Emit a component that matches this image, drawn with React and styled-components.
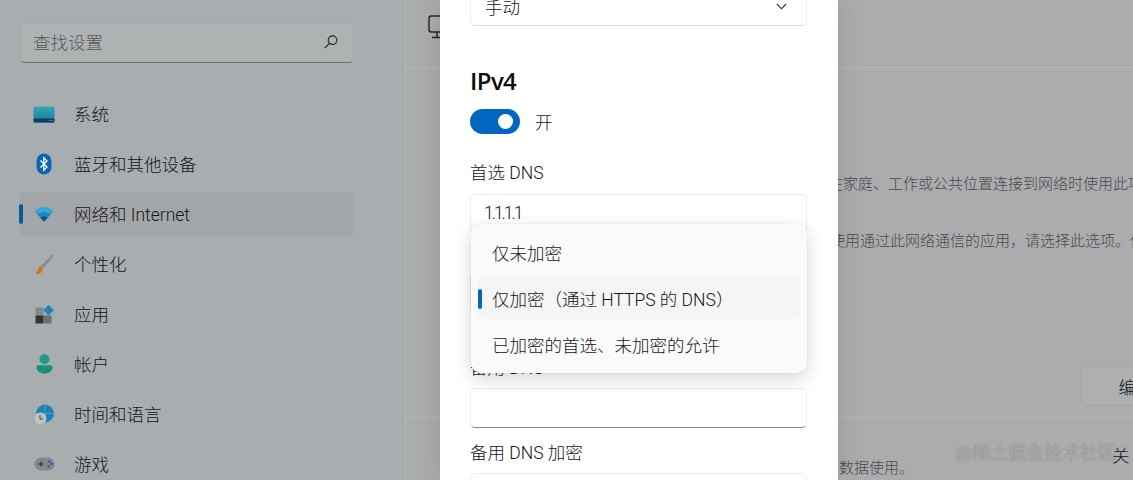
import React from "react";
import styled, { createGlobalStyle } from "styled-components";

const GlobalStyle = createGlobalStyle`
  html, body {
    margin: 0;
    padding: 0;
    overflow: hidden;
    background: #abacae;
  }
  * {
    box-sizing: border-box;
  }
  body {
    font-family: Roboto, "Noto Sans CJK SC", sans-serif;
    font-size: 17.5px;
    font-weight: 300;
    color: #141516;
  }
`;

const Page = styled.div`
  position: relative;
  display: grid;
  grid-template-columns: 405px 1fr;
  width: 1133px;
  height: 480px;
  overflow: hidden;
`;

const Sidebar = styled.aside`
  background: #a8adb0;
  padding: 23px 51px 0 20px;
  overflow: hidden;
`;

const SearchBox = styled.div`
  display: flex;
  align-items: center;
  justify-content: space-between;
  height: 40px;
  padding: 0 15px 3px 12px;
  margin-bottom: 29px;
  background: #afb2b3;
  border: 1px solid #a5a8aa;
  border-bottom: 1px solid #6d7073;
  border-radius: 5px;
  color: #55585a;
`;

const NavList = styled.nav`
  display: flex;
  flex-direction: column;
  gap: 6px;
`;

const NavItem = styled.div`
  position: relative;
  display: flex;
  align-items: center;
  gap: 19px;
  height: 44px;
  padding-left: 13px;
  border-radius: 5px;
  background: ${(p) => (p.$active ? "#a3a6a8" : "transparent")};
  &::before {
    content: "";
    display: ${(p) => (p.$active ? "block" : "none")};
    position: absolute;
    left: -1px;
    top: 12px;
    width: 4px;
    height: 20px;
    border-radius: 2px;
    background: #0a5a96;
  }
`;

const NavLabel = styled.span`
  margin-top: -2px;
`;

const IconSlot = styled.span`
  display: flex;
  align-items: center;
  justify-content: center;
  width: 22px;
  height: 22px;
  flex: none;
`;

const Content = styled.main`
  background: #abacae;
  border-left: 1px solid #b2b4b5;
  overflow: hidden;
`;

const HeaderBar = styled.header`
  display: flex;
  align-items: flex-start;
  height: 68px;
  padding: 15px 0 0 22px;
  border-bottom: 1px solid #b6b8b9;
`;

const Description = styled.p`
  margin: 0;
  padding-left: ${(p) => p.$indent}px;
  height: 21px;
  line-height: 21px;
  font-size: 15px;
  white-space: nowrap;
  color: #48494b;
`;

const DescriptionStack = styled.div`
  display: flex;
  flex-direction: column;
  gap: 36px;
  padding-top: 106px;
`;

const ActionRow = styled.div`
  display: flex;
  height: 52px;
  margin-top: 114px;
  padding-left: 675px;
  border-bottom: 1px solid #b3b5b6;
`;

const EditButton = styled.button`
  flex: none;
  width: 110px;
  height: 40px;
  padding: 0;
  font: inherit;
  color: #141516;
  background: #adafb0;
  border: 1px solid #a3a5a7;
  border-radius: 5px;
  white-space: nowrap;
`;

const BottomRow = styled.div`
  display: flex;
  align-items: flex-start;
`;

const StateLabel = styled.span`
  margin: 26px 0 0 198px;
  line-height: 24px;
`;

const BottomNote = styled(Description)`
  margin-top: 40px;
`;

const Dialog = styled.section`
  position: absolute;
  top: 0;
  left: 440px;
  width: 398px;
  height: 480px;
  padding: 0 31px 0 30px;
  background: #ffffff;
  overflow: hidden;
  box-shadow: 0 0 26px rgba(0, 0, 0, 0.12);
  clip-path: inset(0 -40px);
`;

const Field = styled.div`
  display: flex;
  align-items: center;
  justify-content: space-between;
  height: ${(p) => p.$height || 40}px;
  margin-top: ${(p) => p.$top || 0}px;
  padding: 0 19px 3px 14px;
  background: #fff;
  border: 1px solid #ececec;
  border-bottom: 1px solid ${(p) => (p.$focused ? "#868686" : "#dcdcdc")};
  border-radius: 5px;
`;

const FieldValue = styled.span`
  margin-left: -1px;
  letter-spacing: -2px;
`;

const Heading = styled.h2`
  margin: 36px 0 0;
  height: 38px;
  line-height: 38px;
  font-family: "Open Sans", sans-serif;
  font-size: 24px;
  font-weight: 600;
  letter-spacing: -0.6px;
  color: #0b0b0b;
`;

const ToggleRow = styled.div`
  display: flex;
  align-items: center;
  gap: 15px;
  margin-top: 9px;
  height: 25px;
`;

const Toggle = styled.span`
  display: flex;
  align-items: center;
  justify-content: flex-end;
  width: 50px;
  height: 25px;
  padding-right: 7px;
  border-radius: 13px;
  background: #0067c0;
  &::after {
    content: "";
    width: 15px;
    height: 15px;
    border-radius: 50%;
    background: #fff;
  }
`;

const Label = styled.div`
  height: 24px;
  line-height: 24px;
  margin-top: ${(p) => p.$top}px;
`;

const Menu = styled.ul`
  position: absolute;
  top: 224px;
  left: 31px;
  width: 336px;
  height: 149px;
  margin: 0;
  padding: 8px 7px;
  display: flex;
  flex-direction: column;
  gap: 4px;
  list-style: none;
  background: #fafafa;
  border-radius: 10px;
  box-shadow: 0 6px 18px rgba(0, 0, 0, 0.16), 0 0 2px rgba(0, 0, 0, 0.08);
`;

const MenuItem = styled.li`
  position: relative;
  display: flex;
  align-items: center;
  height: 42px;
  padding-left: 14px;
  border-radius: 5px;
  background: ${(p) => (p.$selected ? "#f5f5f5" : "transparent")};
  &::before {
    content: "";
    display: ${(p) => (p.$selected ? "block" : "none")};
    position: absolute;
    left: 0;
    top: 11px;
    width: 4px;
    height: 20px;
    border-radius: 2px;
    background: #0067c0;
  }
`;

const Watermark = styled.div`
  position: absolute;
  left: 956px;
  top: 441px;
  font-size: 18px;
  font-weight: 400;
  line-height: 24px;
  white-space: nowrap;
  color: rgba(255, 255, 255, 0.45);
  text-shadow: 0 0 1px rgba(70, 70, 70, 0.8);
`;

const SystemIcon = () => (
  <svg width="22" height="17" viewBox="0 0 22 17">
    <defs>
      <linearGradient id="sys" x1="0" y1="0" x2="0" y2="1">
        <stop offset="0" stopColor="#34a5b8" />
        <stop offset="1" stopColor="#1b78a0" />
      </linearGradient>
    </defs>
    <rect x="0.5" y="0.5" width="21" height="16" rx="1.5" fill="url(#sys)" />
    <path d="M.5 12.5h21V15a1.5 1.5 0 0 1-1.5 1.5H2A1.5 1.5 0 0 1 .5 15z" fill="#0b4063" />
    <path d="M16 14.5h1M18.5 14.5h1" stroke="#8fb5c8" />
  </svg>
);

const BluetoothIcon = () => (
  <svg width="16" height="22" viewBox="0 0 16 22">
    <rect x="0.5" y="0.5" width="15" height="21" rx="7.5" fill="#0b66b8" />
    <path d="M4.5 7.5 11 14l-3.2 3.2V4.8L11 8l-6.5 6.500" fill="none" stroke="#fff" strokeWidth="1.3" />
  </svg>
);

const WifiIcon = () => (
  <svg width="20" height="16" viewBox="0 0 20 16">
    <path d="M0.500 5.500C5.500 -.5 14.500 -.5 19.500 5.500L10 15.500z" fill="#36a6d6" />
    <path d="M3.500 8.600C7 5 13 5 16.500 8.600L10 15.500z" fill="#1a86c4" />
    <path d="M6.500 11.700C8.500 10 11.500 10 13.500 11.700L10 15.500z" fill="#0d4f86" />
  </svg>
);

const BrushIcon = () => (
  <svg width="20" height="21" viewBox="0 0 20 21">
    <path d="M18.300 .5 6.500 12l2.600 2.800L19.800 1.800z" fill="#8b8e91" />
    <path d="M6.300 12.300C4 13.500 4 17.500 1 20c3.500.5 7-.5 8-5z" fill="#d9730f" />
  </svg>
);

const AppsIcon = () => (
  <svg width="19" height="19" viewBox="0 0 19 19">
    <rect x="0.500" y="2.500" width="8" height="8" fill="#85888b" />
    <rect x="0.500" y="10.500" width="8" height="8" fill="#2f3237" />
    <rect x="8.500" y="10.500" width="8" height="8" fill="#6c6f73" />
    <path d="M13.500 0 18.800 5.300 13.500 10.500 8.300 5.300z" fill="#1b84b8" />
  </svg>
);

const AccountIcon = () => (
  <svg width="17" height="20" viewBox="0 0 17 20">
    <circle cx="8.500" cy="5.200" r="5" fill="#1f9a86" />
    <path d="M.500 13c0-1 .8-1.800 1.800-1.800h12.400c1 0 1.800.8 1.800 1.800 0 4-3.500 6.500-8 6.500S.500 17 .500 13z" fill="#17907e" />
  </svg>
);

const TimeIcon = () => (
  <svg width="20" height="21" viewBox="0 0 20 21">
    <circle cx="11" cy="9.500" r="9" fill="#1f82b8" />
    <path d="M11 .5v18M2 9.500h18" stroke="#5bb1d6" strokeWidth="0.600" />
    <circle cx="6.500" cy="14.500" r="6" fill="#bfc1c3" />
    <path d="M6 11v4h3" fill="none" stroke="#333" strokeWidth="0.900" />
  </svg>
);

const GameIcon = () => (
  <svg width="21" height="14" viewBox="0 0 21 14">
    <rect x="0.500" y="0.500" width="20" height="13" rx="6.500" fill="#85888b" />
    <path d="M4.500 7h5M7 4.500v5" stroke="#26282b" strokeWidth="1" />
    <circle cx="15.500" cy="4.500" r="1.300" fill="#1e62ae" />
    <circle cx="17.500" cy="7" r="1.300" fill="#1e62ae" />
    <circle cx="14.500" cy="9.500" r="1.300" fill="#1e62ae" />
  </svg>
);

const SearchIcon = () => (
  <svg width="14" height="14" viewBox="0 0 14 14" fill="none" stroke="#242527" strokeWidth="1.100">
    <circle cx="8.500" cy="5.200" r="4.300" />
    <path d="M5.400 8.300.800 13" />
  </svg>
);

const MonitorIcon = () => (
  <svg width="24" height="24" viewBox="0 0 24 24" fill="none" stroke="#26282a" strokeWidth="1.500">
    <rect x="1" y="1" width="22" height="16" rx="2.500" />
    <path d="M9 17v5M4 22.500h12" />
  </svg>
);

const Chevron = () => (
  <svg width="11" height="7" viewBox="0 0 11 7" fill="none" stroke="#3c3c3c" strokeWidth="1.100">
    <path d="M.8 1 5.500 5.700 10.200 1" />
  </svg>
);

const navItems = [
  { label: "系统", icon: <SystemIcon /> },
  { label: "蓝牙和其他设备", icon: <BluetoothIcon /> },
  { label: "网络和 Internet", icon: <WifiIcon />, active: true },
  { label: "个性化", icon: <BrushIcon /> },
  { label: "应用", icon: <AppsIcon /> },
  { label: "帐户", icon: <AccountIcon /> },
  { label: "时间和语言", icon: <TimeIcon /> },
  { label: "游戏", icon: <GameIcon /> },
];

const menuItems = ["仅未加密", "仅加密（通过 HTTPS 的 DNS）", "已加密的首选、未加密的允许"];

export default function App() {
  return (
    <Page>
      <GlobalStyle />
      <Sidebar>
        <SearchBox>
          查找设置
          <SearchIcon />
        </SearchBox>
        <NavList>
          {navItems.map((item) => (
            <NavItem key={item.label} $active={item.active}>
              <IconSlot>{item.icon}</IconSlot>
              <NavLabel>{item.label}</NavLabel>
            </NavItem>
          ))}
        </NavList>
      </Sidebar>
      <Content>
        <HeaderBar>
          <MonitorIcon />
        </HeaderBar>
        <DescriptionStack>
          <Description $indent={422}>在家庭、工作或公共位置连接到网络时使用此项</Description>
          <Description $indent={424}>使用通过此网络通信的应用，请选择此选项。但</Description>
        </DescriptionStack>
        <ActionRow>
          <EditButton>编辑</EditButton>
        </ActionRow>
        <BottomRow>
          <BottomNote $indent={433}>数据使用。</BottomNote>
          <StateLabel>关</StateLabel>
        </BottomRow>
      </Content>
      <Dialog>
        <Field $top={-10} $height={36}>
          手动
          <Chevron />
        </Field>
        <Heading>IPv4</Heading>
        <ToggleRow>
          <Toggle />
          开
        </ToggleRow>
        <Label $top={27}>首选 DNS</Label>
        <Field $top={9}>
          <FieldValue>1.1.1.1</FieldValue>
        </Field>
        <Label $top={7}>首选 DNS 加密</Label>
        <Field $top={8} />
        <Label $top={43}>备用 DNS</Label>
        <Field $top={8} $focused />
        <Label $top={13}>备用 DNS 加密</Label>
        <Field $top={8} />
        <Menu>
          {menuItems.map((text, i) => (
            <MenuItem key={text} $selected={i === 1}>
              {text}
            </MenuItem>
          ))}
        </Menu>
      </Dialog>
      <Watermark>@稀土掘金技术社区</Watermark>
    </Page>
  );
}
